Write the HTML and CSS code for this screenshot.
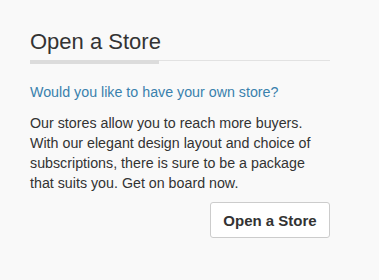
FILE: index.html
```html
<!DOCTYPE html>
<html>
<head>
<meta charset="utf-8">
<link rel="stylesheet" href="styles.css">
</head>
<body>
<section class="panel">
  <h2 class="title">Open a Store</h2>
  <div class="title-rule"></div>
  <p class="lead">Would you like to have your own store?</p>
  <p class="text">Our stores allow you to reach more buyers. With our elegant design layout and choice of subscriptions, there is sure to be a package that suits you. Get on board now.</p>
  <div class="actions">
    <button class="btn">Open a Store</button>
  </div>
</section>
</body>
</html>
```
FILE: styles.css
```css
html, body {
  margin: 0;
  padding: 0;
  background: #f9f9f9;
}
body {
  font-family: "Liberation Sans", Arial, sans-serif;
  color: #333;
}
.panel {
  width: 300px;
  padding: 27px 30px 0;
}
.title {
  margin: 0;
  font-size: 22px;
  font-weight: normal;
  line-height: 30px;
  color: #333;
}
.title-rule {
  margin-top: 3px;
  height: 4px;
  background:
    linear-gradient(#dcdcdc, #dcdcdc) no-repeat 0 0 / 129px 4px,
    linear-gradient(#e2e2e2, #e2e2e2) no-repeat 0 0 / 100% 1px;
}
.lead {
  margin: 18px 0 0;
  font-size: 14.25px;
  line-height: 20px;
  color: #3a81ad;
}
.text {
  margin: 11px 0 0;
  font-size: 14.25px;
  line-height: 20px;
}
.actions {
  display: flex;
  justify-content: flex-end;
  margin-top: 9px;
}
.btn {
  width: 120px;
  height: 36px;
  background: #fff;
  border: 1px solid #ccc;
  border-radius: 3px;
  font-family: "Liberation Sans", Arial, sans-serif;
  font-size: 15px;
  font-weight: bold;
  color: #333;
  padding: 0;
}
```
